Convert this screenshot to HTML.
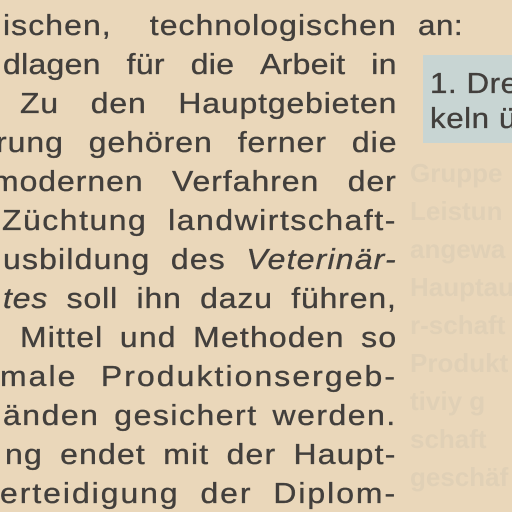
<!DOCTYPE html>
<html><head><meta charset="utf-8"><style>
html,body{margin:0;padding:0}
body{width:512px;height:512px;overflow:hidden;position:relative;background:#ead7ba;font-family:"Liberation Sans",sans-serif;color:#423f3c}
.l{position:absolute;font-size:29px;line-height:28px;letter-spacing:1px;white-space:nowrap;display:flex;justify-content:space-between;-webkit-text-stroke:0.35px #423f3c;transform:scaleX(1.1);transform-origin:0 0}
.l i{font-style:italic}
.box{position:absolute;left:423px;top:55px;width:100px;height:88px;background:#c8d5d3}
.r{position:absolute;font-size:29px;line-height:28px;letter-spacing:0.5px;white-space:nowrap;-webkit-text-stroke:0.35px #423f3c;transform:scaleX(1.08);transform-origin:0 0}
.g{position:absolute;left:410px;font-size:26px;line-height:26px;white-space:nowrap;color:#e0d0b6;font-weight:bold}
</style></head><body>
<div class="g" style="top:160px">Gruppe</div>
<div class="g" style="top:198px">Leistun</div>
<div class="g" style="top:236px">angewa</div>
<div class="g" style="top:274px">Hauptau</div>
<div class="g" style="top:312px">r-schaft</div>
<div class="g" style="top:350px">Produkt</div>
<div class="g" style="top:388px">tiviy g</div>
<div class="g" style="top:426px">schaft</div>
<div class="g" style="top:464px">geschäf</div>

<div class="l" style="left:3px;width:358px;top:12px;letter-spacing:1px"><span>ischen,</span><span>technologischen</span></div>
<div class="l" style="left:3px;width:358px;top:51px;letter-spacing:0.3px"><span>dlagen</span><span>für</span><span>die</span><span>Arbeit</span><span>in</span></div>
<div class="l" style="left:20px;width:343px;top:90px;letter-spacing:0.8px"><span>Zu</span><span>den</span><span>Hauptgebieten</span></div>
<div class="l" style="left:-4px;width:365px;top:129px;letter-spacing:0.9px"><span>rung</span><span>gehören</span><span>ferner</span><span>die</span></div>
<div class="l" style="left:-8px;width:368px;top:168px;letter-spacing:0.9px"><span>modernen</span><span>Verfahren</span><span>der</span></div>
<div class="l" style="left:2px;width:359px;top:207px;letter-spacing:1.4px"><span>Züchtung</span><span>landwirtschaft-</span></div>
<div class="l" style="left:3px;width:358px;top:246px;letter-spacing:1.1px"><span>usbildung</span><span>des</span><span><i>Veterinär-</i></span></div>
<div class="l" style="left:3px;width:358px;top:285px;letter-spacing:0.8px"><span><i>tes</i></span><span>soll</span><span>ihn</span><span>dazu</span><span>führen,</span></div>
<div class="l" style="left:20px;width:343px;top:324px;letter-spacing:1.1px"><span>Mittel</span><span>und</span><span>Methoden</span><span>so</span></div>
<div class="l" style="left:0px;width:361px;top:363px;letter-spacing:1.9px"><span>male</span><span>Produktionsergeb-</span></div>
<div class="l" style="left:3px;width:358px;top:402px;letter-spacing:1.4px"><span>änden</span><span>gesichert</span><span>werden.</span></div>
<div class="l" style="left:5px;width:356px;top:441px;letter-spacing:1.1px"><span>ng</span><span>endet</span><span>mit</span><span>der</span><span>Haupt-</span></div>
<div class="l" style="left:0px;width:361px;top:480px;letter-spacing:1.8px"><span>erteidigung</span><span>der</span><span>Diplom-</span></div>

<div class="r" style="left:418px;top:12px">an:</div>
<div class="box"></div>
<div class="r" style="left:430px;top:70px">1. Dre</div>
<div class="r" style="left:430px;top:105px">keln ü</div>
</body></html>
